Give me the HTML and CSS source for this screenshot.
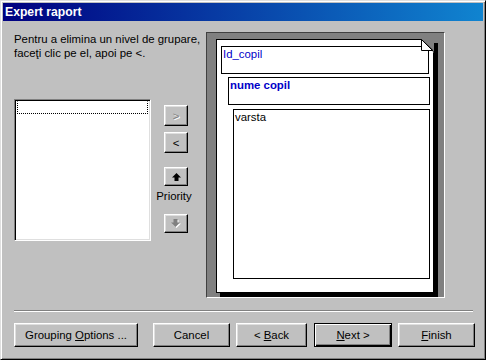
FILE: index.html
```html
<!DOCTYPE html>
<html>
<head>
<meta charset="utf-8">
<link rel="stylesheet" href="styles.css">
</head>
<body>
<div class="window">
  <div class="titlebar">Expert raport</div>
  <div class="client">
    <div class="main">
      <div class="left">
        <p class="hint">Pentru a elimina un nivel de grupare,<br>faceţi clic pe el, apoi pe &lt;.</p>
        <div class="listrow">
          <div class="listbox"><div class="focusrow"></div></div>
          <div class="sidebtns">
            <div class="btn small disabled"><span>&gt;</span></div>
            <div class="btn small gap6"><span>&lt;</span></div>
            <div class="btn arrow gap14">
              <svg width="9" height="8" viewBox="0 0 9 8"><path d="M4.5 0 L9 4.5 L6.5 4.5 L6.5 8 L2.5 8 L2.5 4.5 L0 4.5 Z" fill="#000"/></svg>
            </div>
            <div class="prio">Priority</div>
            <div class="btn arrow">
              <svg width="10" height="9" viewBox="0 0 10 9"><path d="M3.5 1 L7.5 1 L7.5 4.5 L10 4.5 L5.5 9 L1 4.5 L3.5 4.5 Z" fill="#fff"/><path d="M2.5 0 L6.5 0 L6.5 3.5 L9 3.5 L4.5 8 L0 3.5 L2.5 3.5 Z" fill="#808080"/></svg>
            </div>
          </div>
        </div>
      </div>
      <div class="preview">
        <div class="page">
          <div class="fbox f1"><span class="t-id">Id_copil</span></div>
          <div class="fbox f2"><span class="t-nume">nume copil</span></div>
          <div class="fbox f3"><span class="t-var">varsta</span></div>
          <svg class="dogear" width="13" height="14" viewBox="0 0 13 14">
            <path d="M0 0 L13 0 L13 14 Z" fill="#808080"/>
            <path d="M0.5 0.5 L0.5 11.5 L12 11.5 Z" fill="#fff" stroke="#000" stroke-width="1"/>
            <path d="M0.5 0.5 L12.5 12.5" stroke="#000" stroke-width="1"/>
          </svg>
        </div>
      </div>
    </div>
    <div class="sep"></div>
    <div class="buttons">
      <div class="btn wide b-group"><span>Grouping <u>O</u>ptions ...</span></div>
      <div class="btn wide b-cancel"><span>Cancel</span></div>
      <div class="btn wide b-back"><span>&lt; <u>B</u>ack</span></div>
      <div class="btn wide b-next default"><span><u>N</u>ext &gt;</span></div>
      <div class="btn wide b-finish"><span><u>F</u>inish</span></div>
    </div>
  </div>
</div>
</body>
</html>
```
FILE: styles.css
```css
* { box-sizing: border-box; }
html, body { margin: 0; padding: 0; }
body {
  width: 486px;
  height: 360px;
  overflow: hidden;
  background: #c0c0c0;
  font-family: "Liberation Sans", Arial, sans-serif;
  font-size: 11.4px;
  color: #000;
}
.window {
  width: 486px;
  height: 360px;
  background: #c0c0c0;
  border: 1px solid;
  border-color: #dfdfdf #000 #000 #dfdfdf;
  box-shadow: inset 1px 1px #fff, inset -1px -1px #808080;
  padding: 2px;
}
.titlebar {
  height: 18px;
  background: linear-gradient(to right, #000080, #1084d0);
  color: #fff;
  font-weight: bold;
  font-size: 12.2px;
  line-height: 18px;
  padding-left: 2px;
}
.client {
  padding: 11px 0 0 11px;
}
.main {
  display: flex;
  height: 266px;
}
.left {
  width: 192px;
}
.hint {
  margin: 0;
  line-height: 14px;
}
.listrow {
  display: flex;
  margin-top: 39px;
}
.listbox {
  width: 137px;
  height: 142px;
  background: #fff;
  border: 1px solid;
  border-color: #808080 #fff #fff #808080;
  box-shadow: inset 1px 1px #000, inset -1px -1px #dfdfdf;
  padding: 1px 2px 0 2px;
}
.focusrow {
  height: 13px;
  border: 1px dotted #000;
  border-top-color: transparent;
}
.sidebtns {
  margin-left: 13px;
  padding-top: 6px;
  display: flex;
  flex-direction: column;
  width: 24px;
}
.btn {
  background: #c0c0c0;
  border: 1px solid;
  border-color: #fff #000 #000 #fff;
  box-shadow: inset -1px -1px #808080, inset 1px 1px #dfdfdf;
  display: flex;
  align-items: center;
  justify-content: center;
}
.btn.small { height: 21px; width: 24px; }
.btn.gap6 { margin-top: 6px; }
.btn.gap14 { margin-top: 14px; }
.btn.arrow { height: 19px; width: 24px; }
.btn.disabled { color: #808080; text-shadow: 1px 1px 0 #fff; }
.prio {
  height: 28px;
  line-height: 16px;
  padding-top: 2px;
  width: 40px;
  margin-left: -10px;
  text-align: center;
}
.preview {
  width: 239px;
  height: 266px;
  background: #808080;
  border: 1px solid;
  border-color: #404040 #fff #fff #404040;
  padding: 6px 0 0 9px;
}
.page {
  position: relative;
  width: 218px;
  height: 254px;
  background: #fff;
  border: 1px solid #000;
  box-shadow: 4px 4px 0 #000;
  padding: 6px 0 0 4px;
}
.dogear {
  position: absolute;
  top: -1px;
  right: -1px;
}
.fbox {
  border: 1px solid #000;
  line-height: 14px;
  padding-left: 1px;
}
.f1 { width: 208px; height: 28px; }
.f2 { width: 202px; height: 28px; margin-top: 3px; margin-left: 7px; }
.f3 { width: 197px; height: 170px; margin-top: 4px; margin-left: 12px; }
.t-id { color: #0000c8; }
.t-nume { color: #0000c8; font-weight: bold; }
.t-var { color: #000; }
.sep {
  width: 459px;
  margin-top: 12px;
  border-top: 1px solid #808080;
  border-bottom: 1px solid #fff;
}
.buttons {
  display: flex;
  margin-top: 11px;
}
.btn.wide { height: 24px; }
.b-group { width: 124px; }
.b-cancel { width: 77px; margin-left: 15px; }
.b-back { width: 71px; margin-left: 6px; }
.b-next { width: 78px; margin-left: 7px; }
.b-finish { width: 77px; margin-left: 6px; }
.btn.default {
  border: 1px solid #000;
  box-shadow: inset 1px 1px #fff, inset -1px -1px #000, inset -2px -2px #808080;
}
u { text-decoration: underline; text-underline-offset: 1px; }
```
